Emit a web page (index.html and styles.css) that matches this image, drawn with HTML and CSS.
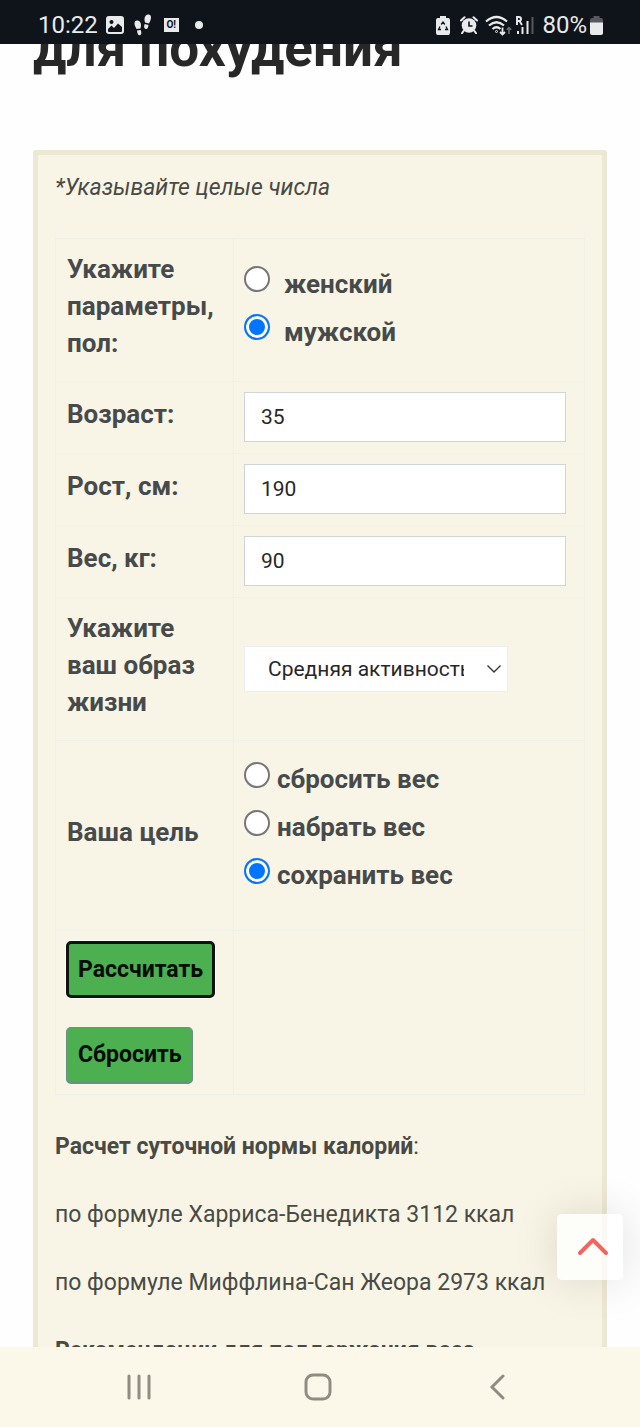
FILE: index.html
```html
<!DOCTYPE html>
<html lang="ru">
<head>
  <meta charset="UTF-8">
  <meta name="viewport" content="width=device-width, initial-scale=1">
  <title>Калькулятор калорий для похудения</title>
  <link rel="stylesheet" href="styles.css">
</head>
<body>
  <header class="status">
    <div class="status-left">
      <span class="time">10:22</span>
      <svg class="ic-image" width="18" height="18" viewBox="0 0 18 18">
        <rect width="18" height="18" rx="3" fill="#e9eaeb"/>
        <circle cx="5.5" cy="6" r="2" fill="#0f141b"/>
        <path d="M2 15v-2l3.500-3.500L8 12l4-4.500L16 11v4q0 1-1 1H3q-1 0-1-1z" fill="#0f141b"/>
      </svg>
      <svg class="ic-steps" width="18" height="22" viewBox="0 0 18 22" fill="#e9eaeb">
        <path d="M3 6.500c2.500-.5 4 2 4 4.500 0 1.500-.3 2.500-.5 3.500L2.500 15C1.500 13 .5 11.500.500 9.500S1.500 6.800 3 6.500z"/>
        <path d="M3 16.500l3.700-.5c1 2.500.8 5-.9 5.300C4 21.600 3.200 19 3 16.500z"/>
        <path d="M14.500.500c-2.500-.5-4 2-4 4.500 0 1.500.3 2.500.5 3.500l4 1c1-2 2-4 2-6S16 .8 14.500.500z"/>
        <path d="M14.500 11l-3.800-1c-1 2.500-.8 4.500.9 5 1.800.4 2.700-1.500 2.900-4z"/>
      </svg>
      <span class="ic-chat">O!</span>
      <span class="dot"></span>
    </div>
    <div class="status-right">
      <svg width="14" height="19" viewBox="0 0 14 19">
        <path d="M4 0h6v2h2q2 0 2 2v13q0 2-2 2H2q-2 0-2-2V4q0-2 2-2h2z" fill="#e9eaeb"/>
        <path d="M5.200 8.500L7 6l1.800 2.500M10 10.500l1.500 3H9M5 13.500H2.500L4 10.500" fill="none" stroke="#0f141b" stroke-width="1.300"/>
      </svg>
      <svg class="ic-alarm" width="18" height="18" viewBox="0 0 18 18">
        <path d="M1 4.500L4.500 1.200M17 4.500l-3.500-3.300M3.500 15L2 17.300M14.500 15l1.500 2.300" stroke="#e9eaeb" stroke-width="2" stroke-linecap="round"/>
        <circle cx="9" cy="9.500" r="7.300" fill="#e9eaeb"/>
        <path d="M9 5.500V10h3.500" fill="none" stroke="#0f141b" stroke-width="1.600"/>
      </svg>
      <svg class="ic-wifi" width="27" height="21" viewBox="0 0 27 21" fill="none" stroke="#e9eaeb" stroke-width="2.200">
        <path d="M1 6.500Q11.500-2.500 22 6.500M4 10.500q7.500-6.500 15 0M7.500 14q4-3.500 8 0"/>
        <circle cx="11.500" cy="16.500" r="1" stroke-width="1"/>
        <path d="M17.500 12.500v7M15 17l2.500 2.500L20 17" stroke-width="1.800"/>
        <path d="M24 19v-6.500M21.800 14.800L24 12.500l2.200 2.300" stroke="#6d7176" stroke-width="1.500"/>
      </svg>
      <svg class="ic-signal" width="19" height="19" viewBox="0 0 19 19" fill="none" stroke="#e9eaeb" stroke-width="2">
        <path d="M2 9V1h2q2 0 2 2t-2 2H2M4.500 5L7 9" stroke-width="1.900"/>
        <path d="M3 15v3M7.500 11v7M12.500 5v13"/>
        <path d="M17.500 1v17" stroke="#55595e"/>
      </svg>
      <span class="percent">80%</span>
      <svg width="13" height="19" viewBox="0 0 13 19">
        <path d="M3.500 0h6v2H11q2 0 2 2v3H0V4q0-2 2-2h1.500z" fill="#55595e"/>
        <path d="M0 6.500h13V17q0 2-2 2H2q-2 0-2-2z" fill="#e9eaeb"/>
      </svg>
    </div>
  </header>

  <main class="content">
    <h1>для похудения</h1>

    <form class="calc">
      <p class="note">*Указывайте целые числа</p>
      <table>
        <tr>
          <th>Укажите параметры, пол:</th>
          <td>
            <div class="radios sex">
              <label><input type="radio" name="sex"> женский</label>
              <label><input type="radio" name="sex" checked> мужской</label>
            </div>
          </td>
        </tr>
        <tr>
          <th><label for="age">Возраст:</label></th>
          <td><input type="text" id="age" value="35"></td>
        </tr>
        <tr>
          <th><label for="height">Рост, см:</label></th>
          <td><input type="text" id="height" value="190"></td>
        </tr>
        <tr>
          <th><label for="weight">Вес, кг:</label></th>
          <td><input type="text" id="weight" value="90"></td>
        </tr>
        <tr>
          <th><label for="activity">Укажите ваш образ жизни</label></th>
          <td>
            <div class="select">
              <select id="activity">
                <option>Средняя активность</option>
              </select>
              <svg width="14" height="8" viewBox="0 0 14 8" fill="none" stroke="#333" stroke-width="1.300"><path d="M.5.5L7 7 13.500.5"/></svg>
            </div>
          </td>
        </tr>
        <tr>
          <th>Ваша цель</th>
          <td>
            <div class="radios goal">
              <label><input type="radio" name="goal"> сбросить вес</label>
              <label><input type="radio" name="goal"> набрать вес</label>
              <label><input type="radio" name="goal" checked> сохранить вес</label>
            </div>
          </td>
        </tr>
        <tr>
          <td class="buttons">
            <button type="button" class="btn active">Рассчитать</button>
            <button type="reset" class="btn">Сбросить</button>
          </td>
          <td></td>
        </tr>
      </table>

      <div class="result">
        <p><b>Расчет суточной нормы калорий</b>:</p>
        <p>по формуле Харриса-Бенедикта 3112 ккал</p>
        <p>по формуле Миффлина-Сан Жеора 2973 ккал</p>
        <p><b>Рекомендации для поддержания веса</b></p>
      </div>
    </form>
  </main>

  <button type="button" class="to-top" aria-label="Наверх">
    <svg width="32" height="20" viewBox="0 0 32 20" fill="none" stroke="#f0655f" stroke-width="4" stroke-linecap="round" stroke-linejoin="round"><path d="M3 17L16 4l13 13"/></svg>
  </button>

  <nav class="navbar">
    <button type="button" aria-label="Недавние">
      <svg width="26" height="26" viewBox="0 0 26 26" stroke="#8f8d82" stroke-width="3" stroke-linecap="round"><path d="M3 2v22M13 2v22M23 2v22"/></svg>
    </button>
    <button type="button" aria-label="Домой">
      <svg width="28" height="28" viewBox="0 0 28 28" fill="none" stroke="#8f8d82" stroke-width="3"><rect x="2" y="2" width="24" height="24" rx="7"/></svg>
    </button>
    <button type="button" aria-label="Назад">
      <svg width="16" height="26" viewBox="0 0 16 26" fill="none" stroke="#8f8d82" stroke-width="3" stroke-linecap="round"><path d="M14 2L3 13l11 11"/></svg>
    </button>
  </nav>
</body>
</html>
```
FILE: styles.css
```css
* {
  box-sizing: border-box;
}
body {
  margin: 0;
  height: 100vh;
  display: flex;
  flex-direction: column;
  overflow: hidden;
  font-family: Roboto, sans-serif;
  font-size: 23px;
  line-height: 38px;
  color: #4a4a45;
  background: #fefefe;
}

/* верхняя панель телефона */
.status {
  flex: none;
  height: 44px;
  padding: 6px 37px 0 38px;
  display: flex;
  justify-content: space-between;
  background: #0f141b;
  color: #e9eaeb;
  font-size: 24px;
}
.status-left,
.status-right {
  display: flex;
  align-items: center;
}
.time {
  margin-right: 8px;
}
.ic-image {
  margin-right: 10px;
}
.ic-chat {
  width: 15px;
  height: 14px;
  margin-left: 12px;
  background: #e9eaeb;
  color: #0f141b;
  font-size: 10px;
  font-weight: bold;
  line-height: 14px;
  text-align: center;
}
.dot {
  width: 8px;
  height: 8px;
  margin-left: 16px;
  border-radius: 50%;
  background: #e9eaeb;
}
.ic-alarm {
  margin-left: 10px;
}
.ic-wifi {
  margin-left: 7px;
}
.ic-signal {
  margin-left: 3px;
}
.percent {
  margin: 0 3px 0 8px;
}

.content {
  flex: 1;
  min-height: 0;
  padding: 0 33px;
  overflow: hidden;
}
h1 {
  margin: -24px 0 74px;
  font-size: 53px;
  line-height: 56px;
  color: #272727;
}

.calc {
  padding: 14px 17px;
  border: 5px solid #ece8d3;
  border-radius: 3px;
  background: #f8f5e6;
}
.note {
  margin: 0 0 31px;
  font-style: italic;
}
table {
  width: 100%;
  border-collapse: collapse;
  table-layout: fixed;
}
th,
td {
  border: 1px solid #f0f0e9;
}
th {
  width: 178px;
  padding: 12px 11px 19px;
  font-size: 26px;
  line-height: 37px;
  text-align: left;
  color: #474a4b;
}
td {
  padding: 10px 18px 11px 10px;
}

.radios label {
  display: flex;
  align-items: center;
  height: 48px;
  font-size: 26px;
  font-weight: bold;
  color: #474a4b;
}
.sex {
  padding: 0 0 4px;
}
.sex label {
  gap: 14px;
}
.goal {
  padding: 4px 0 20px;
}
.goal label {
  gap: 7px;
}
input[type="radio"] {
  appearance: none;
  width: 26px;
  height: 26px;
  margin: 0 0 9px;
  border: 2px solid #767676;
  border-radius: 50%;
  background: #fff;
}
input[type="radio"]:checked {
  border-color: #0b76f5;
  background: #0075ff;
  box-shadow: inset 0 0 0 3px #fff;
}
input[type="text"] {
  display: block;
  width: 100%;
  height: 50px;
  padding: 0 16px;
  border: 1px solid #d0d4d4;
  background: #fff;
  font: 21px Roboto, sans-serif;
  color: #272727;
}

.select {
  position: relative;
  width: 264px;
}
.select select {
  appearance: none;
  display: block;
  width: 100%;
  height: 46px;
  padding: 0 43px 0 23px;
  border: 1px solid #ecefef;
  border-radius: 0;
  background: #fff;
  font: 21px Roboto, sans-serif;
  color: #272727;
}
.select svg {
  position: absolute;
  right: 7px;
  top: 19px;
}

.buttons {
  padding: 10px;
}
.btn {
  display: block;
  height: 57px;
  padding: 0 11px;
  border: 1px solid #6c8f86;
  border-bottom-width: 3px;
  border-radius: 5px;
  background: #4caf50;
  font: bold 23px Roboto, sans-serif;
  color: #060c06;
}
.btn.active {
  margin-bottom: 29px;
  padding: 0 9px;
  border: 3px solid #101410;
  box-shadow: 0 0 0 1px #fff;
}

.result {
  margin-top: 33px;
}
.result p {
  margin: 0 0 30px;
}

.to-top {
  position: fixed;
  right: 17px;
  bottom: 147px;
  width: 66px;
  height: 66px;
  padding: 0 0 0 6px;
  border: 0;
  border-radius: 5px;
  background: rgba(255, 255, 255, 0.75);
  box-shadow: 0 0 45px rgba(0, 0, 0, 0.12);
}

/* нижняя панель навигации */
.navbar {
  position: relative;
  flex: none;
  height: 80px;
  padding: 2px 53px 0 49px;
  display: flex;
  background: #fcf8e9;
}
.navbar button {
  flex: 1;
  padding: 0;
  border: 0;
  background: none;
}
```
